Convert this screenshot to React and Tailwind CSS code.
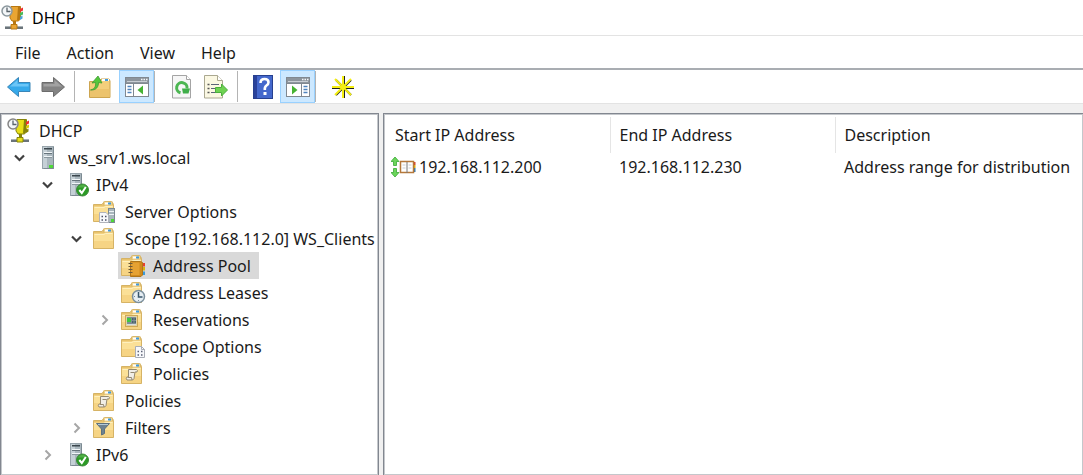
import React from "react";

function Folder({ children }) {
  return (
    <svg viewBox="0 -1 28 27" className="h-[27px] w-7 shrink-0" aria-hidden="true">
      <path d="M3.5 5.500h8.500l1.500-2h9l1 2v17h-20z" fill="#e9c36c" stroke="#d6b365" />
      <rect x="13.500" y="2.500" width="9" height="4" rx="1" fill="#f0d38a" stroke="#d8b76a" />
      <rect x="15" y="3.500" width="4" height="2" fill="#fff" />
      <rect x="18" y="3.500" width="3" height="2" fill="#3f9ade" />
      <path d="M4 7.500h9.500l1.500-1h8v15.500h-19z" fill="#fbe097" />
      <path d="M4 15h19v7h-19z" fill="#f6d484" />
      <path d="M4.500 8.500h9.500l1.500-1h7" fill="none" stroke="#fff0bd" />
      {children}
    </svg>
  );
}

function ServerBody() {
  return (
    <g>
      <rect x="9.500" y="1.500" width="11" height="22" fill="#a9b6bd" stroke="#98a4ab" />
      <rect x="10" y="2" width="4" height="21" fill="#c5d0d6" />
      <rect x="11" y="3" width="8" height="1.500" fill="#3b464d" />
      <path d="M11 7.500h8M11 11.500h8" stroke="#f1f6f8" />
      <path d="M11 8.500h8" stroke="#66747c" />
      <path d="M11 12.500h8" stroke="#8a979e" />
      <path d="M20.500 2v21.500h-10" fill="none" stroke="#7c8a92" />
    </g>
  );
}

function ServerIcon() {
  return (
    <svg viewBox="0 -1 28 27" className="h-[27px] w-7 shrink-0" aria-hidden="true">
      <ServerBody />
      <rect x="16" y="20" width="4" height="3" fill="#4fd838" />
    </svg>
  );
}

function ServerOkIcon() {
  return (
    <svg viewBox="0 -1 28 27" className="h-[27px] w-7 shrink-0" aria-hidden="true">
      <ServerBody />
      <circle cx="21.500" cy="18" r="6" fill="#2b9b25" stroke="#3c8a3a" />
      <path d="M16.800 15.500a5.500 5.500 0 0 1 9.400 0z" fill="#4fae46" />
      <path d="m18.300 18 2.500 3 4-6" fill="none" stroke="#fff" strokeWidth="2" />
    </svg>
  );
}

function DhcpIcon({ flat }) {
  const main = flat ? "#e8df16" : "#eaa532";
  const dark = flat ? "#85830b" : "#b87812";
  const clock = flat ? "#858585" : "#8b979d";
  return (
    <svg viewBox="0 0 24 26" className="h-[26px] w-6 shrink-0" aria-hidden="true">
      <path d="M10 1.500h9.500v12l-2 2.500h-6.500l-2-3v-8z" fill={main} stroke={dark} />
      <path d="M17 2h2.500v11l-2 2.500h-1.500z" fill={dark} />
      <path d="M19 4l3-1.500v3l-3 1.500z" fill="#ef3130" />
      <path d="M19 8l3-1.500v3l-3 1.500z" fill={flat ? "#d9c80a" : "#47b95a"} />
      <path d="M19 12l2.500-1.500v3l-2.500 1.500z" fill={flat ? "#85830b" : "#4aa4dd"} />
      <path d="M12 16h3v5h-3z" fill={dark} />
      <path d="M4 21h18v3h-18z" fill="#6b747a" />
      <path d="M4 21.500h18" stroke="#a9b1b5" />
      <path d="M10 19.500h6v4.500h-6z" fill={main} stroke={dark} />
      <circle cx="6" cy="6" r="5" fill="#f3f6f8" stroke={clock} strokeWidth="1.500" />
      <path d="M6 2.500v4h3.500" fill="none" stroke="#59636a" strokeWidth="1.300" />
    </svg>
  );
}

function ServerOptionsIcon() {
  return (
    <Folder>
      <rect x="18.500" y="9.500" width="6" height="14" fill="#a9b6bd" stroke="#7c8a92" />
      <path d="M19 12.500h5M19 15.500h5" stroke="#eef3f5" />
      <rect x="21" y="20" width="3" height="3" fill="#4fd838" />
      <path d="M9.500 13.500h6.500l2.500 2.500v7.500h-9z" fill="#f7f8fb" stroke="#b0b3bb" />
      <path d="M11.500 17.500h1.500M15 17.500h1.500M11.500 21h1.500M15 21h1.500" stroke="#4a4f66" strokeWidth="1.700" />
    </Folder>
  );
}

function AddressPoolIcon() {
  return (
    <Folder>
      <rect x="24" y="10" width="3" height="3.500" fill="#e8412c" />
      <rect x="24" y="14" width="3" height="3.500" fill="#d8b512" />
      <rect x="24" y="18.500" width="3" height="3.500" fill="#3b9ad9" />
      <path d="M12.500 8.500h10l2 1v12.500l-1.500 1.500h-10.500z" fill="#d08a1c" stroke="#b0761a" />
      <path d="M13 9.500h8.500v12.500h-8.500z" fill="#e6a232" />
      <path d="M10.500 10.500h4M10.500 13.500h4M10.500 16.500h4M10.500 19.500h4" stroke="#6c5a3a" />
    </Folder>
  );
}

function LeasesIcon() {
  return (
    <Folder>
      <circle cx="20.500" cy="16.500" r="6" fill="#e6eef4" stroke="#7b8f9c" strokeWidth="1.500" />
      <path d="M20.500 12v5h4" fill="none" stroke="#38566b" strokeWidth="1.500" />
      <path d="M16 16.500h1M20.500 21v-1" stroke="#7b8f9c" />
    </Folder>
  );
}

function ReservationsIcon() {
  return (
    <Folder>
      <rect x="7.500" y="8.500" width="12" height="11" fill="#dfd3a8" stroke="#cda956" />
      <rect x="9" y="10" width="9" height="8" fill="#7e8f95" />
      <rect x="9" y="11" width="4" height="4" fill="#3fc840" />
      <path d="M14 12h1.500M16.500 12h1.500M14 15h1.500M16.500 15h1.500" stroke="#3b535e" strokeWidth="1.500" />
      <path d="M9 17.500h9" stroke="#d5dde0" />
    </Folder>
  );
}

function ScopeOptionsIcon() {
  return (
    <Folder>
      <path d="M17.500 12.500h6l3 3v8h-9z" fill="#f7f8fb" stroke="#a9adb6" />
      <path d="M23.500 12.500v3h3" fill="none" stroke="#a9adb6" />
      <path d="M19.500 17.500h1.500M23 17.500h1.500M19.500 21h1.500M23 21h1.500" stroke="#5a5f74" strokeWidth="1.500" />
    </Folder>
  );
}

function PoliciesIcon() {
  return (
    <Folder>
      <path d="M10.500 8.500h8q1.500.5.500 2.500h-2l-1 6.500q-.5 1.500-2 1.500h-5q-1.500-1.500 0-3h1.500z" fill="#f1eee6" stroke="#958970" />
      <path d="M10 16.500h3.500l.5 2.500M12.500 11.500h4" fill="none" stroke="#958970" />
    </Folder>
  );
}

function FiltersIcon() {
  return (
    <Folder>
      <path d="M6.500 8.500h13l-5 5.500v4.500l-3 1.500v-6z" fill="#6e8290" stroke="#5c707d" />
      <path d="M8 9.500h10" stroke="#b4c9d6" />
    </Folder>
  );
}

function Chevron({ open }) {
  return (
    <svg viewBox="0 0 28 27" className="h-[27px] w-7" aria-hidden="true">
      {open ? (
        <path d="m10 11.500 4.500 4.500 4.500-4.500" fill="none" stroke="#404040" strokeWidth="2.200" />
      ) : (
        <path d="m12.500 9.500 4.500 4.500-4.500 4.500" fill="none" stroke="#a6a6a6" strokeWidth="2" />
      )}
    </svg>
  );
}

const indents = ["pl-1", "pl-1", "pl-8", "pl-[61px]", "pl-[89px]"];

const tree = [
  { level: 1, label: "ws_srv1.ws.local", Icon: ServerIcon, open: true },
  { level: 2, label: "IPv4", Icon: ServerOkIcon, open: true },
  { level: 3, label: "Server Options", Icon: ServerOptionsIcon },
  { level: 3, label: "Scope [192.168.112.0] WS_Clients", Icon: Folder, open: true },
  { level: 4, label: "Address Pool", Icon: AddressPoolIcon, selected: true },
  { level: 4, label: "Address Leases", Icon: LeasesIcon },
  { level: 4, label: "Reservations", Icon: ReservationsIcon, open: false },
  { level: 4, label: "Scope Options", Icon: ScopeOptionsIcon },
  { level: 4, label: "Policies", Icon: PoliciesIcon },
  { level: 3, label: "Policies", Icon: PoliciesIcon },
  { level: 3, label: "Filters", Icon: FiltersIcon, open: false },
  { level: 2, label: "IPv6", Icon: ServerOkIcon, open: false },
];

function TreeRow({ level, label, Icon, open, selected }) {
  return (
    <li
      role="treeitem"
      aria-level={level + 1}
      aria-expanded={open}
      aria-selected={!!selected}
      className={`flex h-[27px] items-center ${indents[level]}`}
    >
      {open === undefined ? (
        <span className="w-7 shrink-0" />
      ) : (
        <button type="button" aria-label={`Toggle ${label}`} className="w-7 shrink-0">
          <Chevron open={open} />
        </button>
      )}
      <button
        type="button"
        className={`flex h-[27px] items-center gap-[7px] whitespace-nowrap pr-2 ${selected ? "bg-[#d9d9d9]" : ""}`}
      >
        <Icon />
        {label}
      </button>
    </li>
  );
}

function BackIcon() {
  return (
    <svg viewBox="0 0 26 22" className="h-[22px] w-[26px]" aria-hidden="true">
      <path d="M1.500 11 12.500 1.500v5h11.500v9h-11.500v5z" fill="#36a9ea" stroke="#3a86b8" strokeLinejoin="round" />
      <path d="M4 10.500 11.500 4v4h11v2.500z" fill="#6cc6f7" />
    </svg>
  );
}

function ForwardIcon() {
  return (
    <svg viewBox="0 0 26 22" className="h-[22px] w-[26px]" aria-hidden="true">
      <path d="M24.500 11 13.500 1.500v5h-11.500v9h11.500v5z" fill="#848484" stroke="#6c6c6c" strokeLinejoin="round" />
      <path d="M22 10.500 14.500 4v4h-11v2.500z" fill="#a2a2a2" />
    </svg>
  );
}

function UpIcon() {
  return (
    <svg viewBox="0 0 24 24" className="size-6" aria-hidden="true">
      <path d="M1.500 6.500h10l1.500-2.500h8l1 2v16.500h-20.500z" fill="#f3cf7c" stroke="#cda550" />
      <path d="M2 14h19.500v8h-19.500z" fill="#ecc36c" />
      <path d="M14 5h7" stroke="#fff" strokeWidth="2" />
      <path d="M17 5h3" stroke="#3f9ade" strokeWidth="2" />
      <path d="M2.500 15c4.500-1 5.500-4 5-7.500l-3.500.5 6-7 4 7-3.500-.5c0 4-2 8-8 7.500z" fill="#55c73b" stroke="#3f9a33" strokeWidth=".8" />
    </svg>
  );
}

function PaneIcon({ right }) {
  return (
    <svg viewBox="0 0 24 22" className="h-[22px] w-6" aria-hidden="true">
      <rect x=".5" y="1.500" width="23" height="19" fill="#fff" stroke="#808890" />
      <rect x="1" y="2" width="22" height="5" fill="#8d959d" />
      <path d="M2 5.500h20" stroke="#c9ced4" />
      <path d="M16 3.500h1.500M18.500 3.500h1.500M21 3.500h1.500" stroke="#f3f5f7" strokeWidth="1.500" />
      {right ? (
        <g>
          <path d="M15.500 8v12" stroke="#808890" />
          <path d="M17.500 10.500h4M17.500 13.500h4M17.500 16.500h4" stroke="#4f83bd" strokeWidth="1.500" />
          <path d="M6 9.500 11.500 14 6 18.500z" fill="#46b333" />
        </g>
      ) : (
        <g>
          <path d="M8.500 8v12" stroke="#808890" />
          <path d="M2.500 10.500h4M2.500 13.500h4M2.500 16.500h4" stroke="#4f83bd" strokeWidth="1.500" />
          <path d="M18 9.500 12.500 14l5.500 4.500z" fill="#46b333" />
        </g>
      )}
      <path d="M1 7.500h22" stroke="#808890" />
    </svg>
  );
}

function RefreshIcon() {
  return (
    <svg viewBox="0 0 22 26" className="h-[26px] w-[22px]" aria-hidden="true">
      <path d="M1.500 1.500h14l4 4v18.500h-18z" fill="#f6f6f6" stroke="#a4a4a4" />
      <path d="M15.500 1.500v4h4" fill="#fff" stroke="#a4a4a4" />
      <path d="M9.500 18.800a5.200 5.200 0 1 1 6.500-4.300" fill="none" stroke="#4cb652" strokeWidth="3" />
      <path d="M11 14.500h8l-1.500 5h-5.500z" fill="#3fae49" />
    </svg>
  );
}

function ExportIcon() {
  return (
    <svg viewBox="0 0 26 26" className="size-[26px]" aria-hidden="true">
      <path d="M1.500 1.500h13l5 5v17.500h-18z" fill="#fbf8e3" stroke="#aaa890" />
      <path d="M14.500 1.500v5h5" fill="#fff" stroke="#aaa890" />
      <path d="M4.500 10.500h2M4.500 14.500h2M4.500 18.500h2" stroke="#555" strokeWidth="1.500" />
      <path d="M8 10.500h8M8 14.500h5M8 18.500h5" stroke="#5c6678" />
      <path d="M12.500 13.500h6v-3.500l6 6-6 6v-3.500h-6z" fill="#6fd252" stroke="#4bb03c" />
    </svg>
  );
}

function HelpIcon() {
  return (
    <svg viewBox="0 0 20 24" className="h-6 w-5" aria-hidden="true">
      <rect x=".5" y=".5" width="19" height="23" fill="#4468cc" stroke="#27408f" />
      <rect x="1" y="1" width="3" height="22" fill="#2a429a" />
      <path d="M7.500 8q0-4 4-4t4 3.200q0 2-2 3.300t-1.700 4.500" fill="none" stroke="#fff" strokeWidth="2.600" />
      <rect x="10.500" y="17" width="3" height="3" fill="#fff" />
    </svg>
  );
}

function NewIcon() {
  return (
    <svg viewBox="0 0 24 24" className="size-6" aria-hidden="true">
      <path d="M13 1v22M1 13h22M5 5l15 15M20 5 5 20" stroke="#222" strokeWidth="2" />
      <path d="M12 1v22M1 12h22M4 4l16 16M20 4 4 20" stroke="#f5ef12" strokeWidth="2" />
    </svg>
  );
}

function Tool({ label, active, className = "", children }) {
  return (
    <button
      type="button"
      aria-label={label}
      aria-pressed={active}
      className={`flex h-[33px] items-center justify-center ${active ? "w-[35px] border border-[#99d1ff] bg-[#cce8ff]" : "w-[34px]"} ${className}`}
    >
      {children}
    </button>
  );
}

function Divider() {
  return <div className="h-[31px] w-px bg-[#b4b4b4]" />;
}

export default function App() {
  return (
    <div className="flex min-h-screen flex-col bg-[#f0f0f0] font-['Noto_Sans','Open_Sans',sans-serif] text-base leading-6 text-[#1a1a1a]">
      <header className="flex h-[35px] items-center gap-[7px] bg-white pl-px text-black">
        <DhcpIcon />
        <h1>DHCP</h1>
      </header>
      <nav className="flex h-[35px] items-center gap-[26px] border-b-2 border-t border-b-[#a9adb2] border-t-[#e3e3e3] bg-white pl-[15px] pt-px">
        <button type="button">File</button>
        <button type="button">Action</button>
        <button type="button">View</button>
        <button type="button">Help</button>
      </nav>
      <div role="toolbar" aria-label="Tools" className="flex h-[34px] items-center border-b border-[#e3e3e3] bg-white pl-0.5">
        <Tool label="Back"><BackIcon /></Tool>
        <Tool label="Forward"><ForwardIcon /></Tool>
        <div className="w-1" />
        <Divider />
        <Tool label="Up one level" className="ml-2"><UpIcon /></Tool>
        <Tool label="Show or hide console tree" active className="ml-0.5"><PaneIcon /></Tool>
        <Divider />
        <Tool label="Refresh" className="ml-2.5"><RefreshIcon /></Tool>
        <Tool label="Export list"><ExportIcon /></Tool>
        <div className="w-1" />
        <Divider />
        <Tool label="Help" className="ml-2"><HelpIcon /></Tool>
        <Tool label="Show or hide action pane" active><PaneIcon right /></Tool>
        <Divider />
        <Tool label="New" className="ml-2.5"><NewIcon /></Tool>
      </div>
      <main className="flex grow gap-1 pt-[9px]">
        <section className="w-[379px] shrink-0 overflow-hidden border border-b-0 border-[#828790] bg-white pt-[3px] inset-shadow-[0_0_0_1px_#c4c7cb]">
          <ul role="tree" aria-label="Console tree">
            <li role="treeitem" aria-level={1} className="flex h-[27px] items-center pl-1.5">
              <button type="button" className="flex items-center gap-2">
                <DhcpIcon flat />
                DHCP
              </button>
            </li>
            {tree.map((node, i) => (
              <TreeRow key={i} {...node} />
            ))}
          </ul>
        </section>
        <section className="grow overflow-hidden border border-b-0 border-r-0 border-[#828790] bg-white pt-[3px] inset-shadow-[0_0_0_1px_#c4c7cb]">
          <table className="w-full table-fixed border-collapse whitespace-nowrap text-left">
            <thead>
              <tr className="h-9">
                <th className="w-[226px] border-r border-[#e5e5e5] pl-[11px] font-normal">Start IP Address</th>
                <th className="w-[225px] border-r border-[#e5e5e5] pl-[9px] font-normal">End IP Address</th>
                <th className="pl-[9px] font-normal">Description</th>
              </tr>
            </thead>
            <tbody>
              <tr className="h-[27px]">
                <td className="pl-[7px]">
                  <div className="flex items-center gap-[3px]">
                    <svg viewBox="0 0 25 22" className="h-[22px] w-[25px]" aria-hidden="true">
                      <path d="M4 1 8 5.500h-2.500v4h-3v-4h-2.500zM4 21 8 16.500h-2.500v-4h-3v4h-2.500z" fill="#6cd55b" stroke="#39a835" strokeWidth=".8" />
                      <path d="M22 6h2.500v3h-2.500z" fill="#d9442c" />
                      <path d="M22 9h2.500v3h-2.500z" fill="#e2b50f" />
                      <path d="M22 12h2.500v4h-2.500z" fill="#2c78b6" />
                      <rect x="9.500" y="5.500" width="13" height="11" fill="#fff" stroke="#b5783a" strokeWidth="1.500" />
                      <path d="M16 6v11" stroke="#777" />
                      <path d="M11.500 9h3M11.500 12h3M17.500 9h3M17.500 12h3" stroke="#c9ced3" />
                    </svg>
                    192.168.112.200
                  </div>
                </td>
                <td className="pl-[9px]">192.168.112.230</td>
                <td className="pl-[9px]">Address range for distribution</td>
              </tr>
            </tbody>
          </table>
        </section>
      </main>
    </div>
  );
}
